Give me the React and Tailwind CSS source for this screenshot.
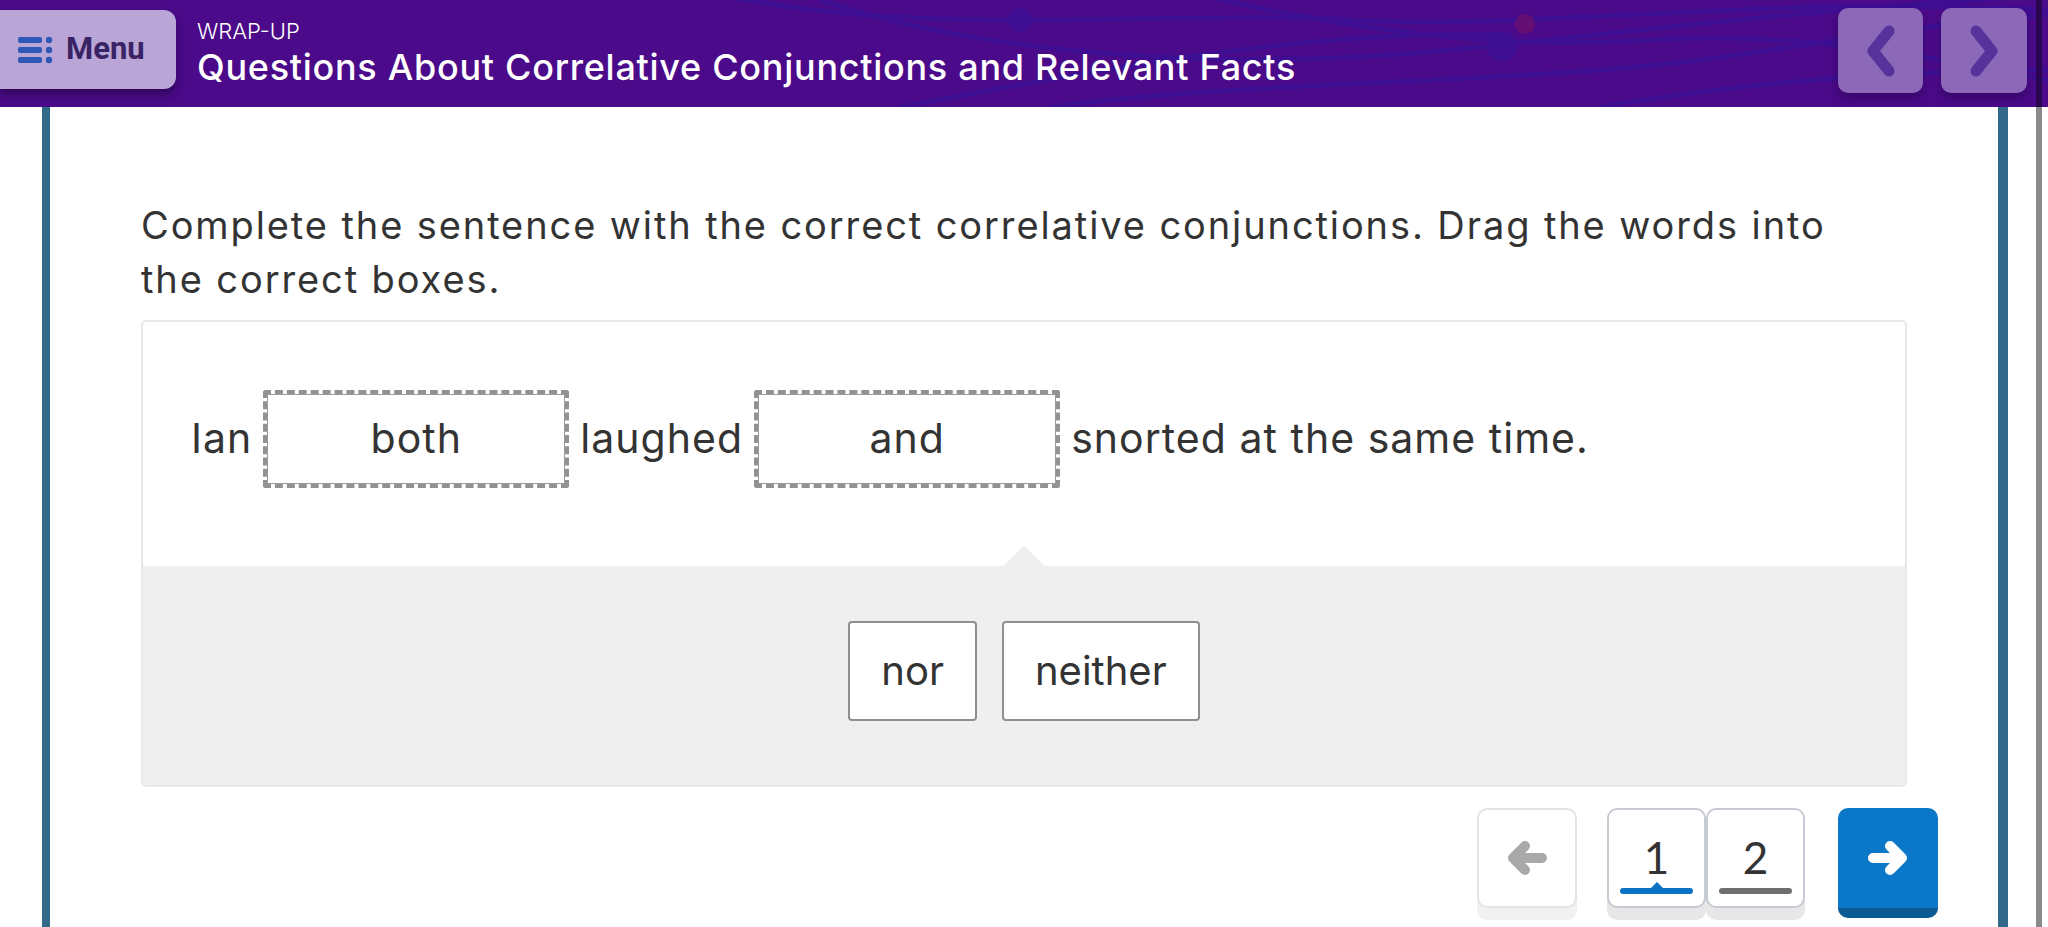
import React from "react";

const MenuIcon = () => (
  <svg width="36" height="28" viewBox="0 0 36 28" fill="#2f57b5">
    <rect x="0" y="1" width="24" height="6" rx="2" />
    <rect x="0" y="11" width="24" height="6" rx="2" />
    <rect x="0" y="21" width="24" height="6" rx="2" />
    <circle cx="31" cy="4" r="3.2" />
    <circle cx="31" cy="14" r="3.2" />
    <circle cx="31" cy="24" r="3.2" />
  </svg>
);

const Chevron = ({ dir }) => (
  <svg width="38" height="56" viewBox="0 0 38 56">
    <path
      d={dir === "left" ? "M27 8 L11 28 L27 48" : "M11 8 L27 28 L11 48"}
      fill="none"
      stroke="#55339a"
      strokeWidth="11"
      strokeLinecap="round"
      strokeLinejoin="round"
    />
  </svg>
);

const Arrow = ({ dir, color }) => (
  <svg width="42" height="36" viewBox="0 0 42 36">
    <g transform={dir === "right" ? "translate(42 0) scale(-1 1)" : undefined}>
      <path
        d="M36 18 H10 M19 6 L7 18 L19 30"
        fill="none"
        stroke={color}
        strokeWidth="10"
        strokeLinecap="round"
        strokeLinejoin="round"
      />
    </g>
  </svg>
);

// header background swirls
const Swirls = () => (
  <svg
    className="absolute inset-0 pointer-events-none"
    width="2048"
    height="107"
    viewBox="0 0 2048 107"
  >
    <g fill="none" stroke="#3b0f94" strokeWidth="5" opacity="0.85">
      <path d="M700 -10 C900 40 1150 10 1350 20 C1550 30 1750 -5 2048 10" />
      <path d="M820 0 C1000 60 1250 70 1450 50 C1650 30 1800 10 2048 -5" />
      <path d="M1050 107 C1250 80 1500 85 1700 60 C1850 40 1950 20 2048 15" />
      <path d="M1200 -5 C1350 30 1500 50 1650 40 C1800 30 1950 60 2048 80" />
      <path d="M1600 107 C1700 90 1850 70 2048 70" />
      <path d="M900 107 C1100 70 1300 30 1500 35" />
    </g>
    <circle cx="1020" cy="20" r="12" fill="#3b0f94" opacity="0.85" />
    <circle cx="1502" cy="46" r="15" fill="#3b0f94" opacity="0.85" />
    <circle cx="1525" cy="24" r="10" fill="#6b0f6e" opacity="0.8" />
    <circle cx="1880" cy="20" r="10" fill="#6b0f6e" opacity="0.5" />
  </svg>
);

const DropBox = ({ word }) => (
  <div className="border-[4px] border-dashed border-[#929292] rounded-[3px]">
    <div className="w-[298px] h-[90px] border border-[#9a9a9a] flex items-center justify-center text-[#333]">
      {word}
    </div>
  </div>
);

const Tile = ({ word }) => (
  <div className="h-[100px] px-[31px] flex items-center bg-white border-2 border-[#8f8f8f] rounded-[4px] text-[40px] text-[#333]">
    {word}
  </div>
);

export default function App() {
  return (
    <div className="w-full h-[927px] overflow-hidden bg-white flex flex-col font-['Inter','Noto_Sans',sans-serif]">
      <header className="relative h-[107px] shrink-0 bg-[#4b0a89] flex items-start">
        <Swirls />
        <button className="relative mt-[10px] h-[79px] w-[176px] rounded-r-[12px] bg-[#b9a6d7] shadow-[0_6px_8px_rgba(20,0,50,0.5)] flex items-center gap-[12px] pl-[18px]">
          <MenuIcon />
          <span className="font-['Roboto',sans-serif] font-bold text-[31px] text-[#3a2365]">Menu</span>
        </button>
        <div className="relative ml-[21px] mt-[17px] text-white">
          <div className="text-[22px] font-light leading-[28px]">WRAP-UP</div>
          <div className="text-[36px] font-medium leading-[44px] tracking-[0.02em]">
            Questions About Correlative Conjunctions and Relevant Facts
          </div>
        </div>
        <div className="relative ml-auto mt-[8px] mr-[21px] flex gap-[18px]">
          <button className="w-[85px] h-[85px] rounded-[10px] bg-[#8c68b9] flex items-center justify-center shadow-[0_6px_8px_rgba(20,0,50,0.35)]">
            <Chevron dir="left" />
          </button>
          <button className="w-[86px] h-[85px] rounded-[10px] bg-[#8c68b9] flex items-center justify-center shadow-[0_6px_8px_rgba(20,0,50,0.35)]">
            <Chevron dir="right" />
          </button>
        </div>
        <div className="absolute right-[6px] top-0 h-full w-[6px] bg-[#2a0650]" />
      </header>

      <div className="flex flex-1 min-h-0">
        <div className="w-[42px] shrink-0" />
        <main className="w-[1966px] shrink-0 border-l-[8px] border-r-[10px] border-[#336a8a] px-[91px] pt-[91px]">
          <p className="max-w-[1720px] text-[38px] leading-[54px] text-[#333] tracking-[0.05em]">
            Complete the sentence with the correct correlative conjunctions. Drag the words into the correct boxes.
          </p>

          <div className="mt-[14px] border-2 border-[#e8e8e8] rounded-[5px] overflow-hidden">
            <div className="h-[244px] bg-white flex items-center pl-[48px] pb-[10px] gap-[11px] text-[41px] tracking-[0.025em] text-[#333]">
              <span>Ian</span>
              <DropBox word="both" />
              <span>laughed</span>
              <DropBox word="and" />
              <span>snorted at the same time.</span>
            </div>
            <div className="relative h-[219px] bg-[#efefef] flex items-center justify-center gap-[25px] pb-[10px]">
              <div className="absolute left-1/2 -translate-x-1/2 -top-[20px] w-0 h-0 border-x-[21px] border-x-transparent border-b-[20px] border-b-[#efefef]" />
              <Tile word="nor" />
              <Tile word="neither" />
            </div>
          </div>

          <div className="mt-[21px] -mr-[31px] flex justify-end items-start">
            <button className="w-[100px] h-[100px] rounded-[10px] border-2 border-[#e4e4e4] bg-white shadow-[0_12px_0_#f1f1f1] flex items-center justify-center">
              <Arrow dir="left" color="#a9a9a9" />
            </button>
            <div className="ml-[30px] flex">
              <button className="relative w-[99px] h-[100px] rounded-[10px] border-2 border-[#c6cad2] bg-white shadow-[0_12px_0_#e7e7e7] flex justify-center">
                <span className="mt-[25px] font-['Lato',sans-serif] text-[44px] leading-none text-[#333]">1</span>
                <div className="absolute left-[11px] right-[11px] bottom-[12px] h-[6px] rounded-full bg-[#0a73c6]" />
                <div className="absolute left-1/2 -translate-x-1/2 bottom-[17px] w-0 h-0 border-x-[7px] border-x-transparent border-b-[7px] border-b-[#0a73c6]" />
              </button>
              <button className="relative w-[99px] h-[100px] rounded-[10px] border-2 border-[#c6cad2] bg-white shadow-[0_12px_0_#e7e7e7] flex justify-center">
                <span className="mt-[25px] font-['Lato',sans-serif] text-[44px] leading-none text-[#333]">2</span>
                <div className="absolute left-[11px] right-[11px] bottom-[12px] h-[6px] rounded-full bg-[#6f6f6f]" />
              </button>
            </div>
            <button className="ml-[33px] w-[100px] h-[110px] rounded-[10px] bg-[#0a77c9] border-b-[10px] border-[#0c5b95] flex items-center justify-center">
              <Arrow dir="right" color="#ffffff" />
            </button>
          </div>
        </main>
        <div className="w-[28px] shrink-0" />
        <div className="w-[6px] shrink-0 bg-[#8a8a8a]" />
      </div>
    </div>
  );
}
